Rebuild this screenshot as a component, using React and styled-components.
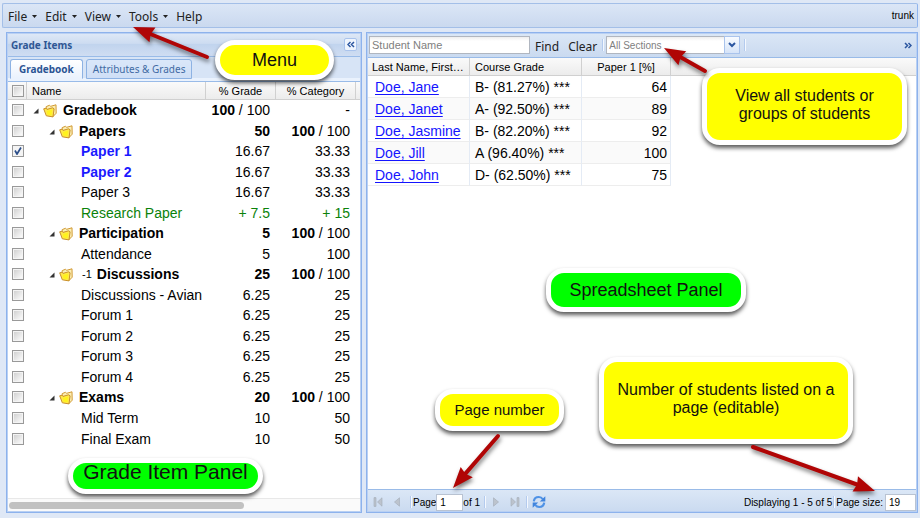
import React, { useState } from 'react';
import styled, { createGlobalStyle, css } from 'styled-components';

const ARIAL = '"Liberation Sans", Arial, sans-serif';
const TAHOMA = '"Noto Sans", Tahoma, sans-serif';

const GlobalStyle = createGlobalStyle`
  *, *::before, *::after { box-sizing: border-box; }
  body { margin: 0; background: #dfe8f6; font-family: ${ARIAL}; color: #000; }
  button, input, select { font: inherit; color: inherit; margin: 0; }
`;

const Page = styled.div`
  position: relative;
  display: flex;
  flex-direction: column;
  height: 100vh;
  overflow: hidden;
  padding: 3px 2px 5px;
  background: #dfe8f6;
`;

const MenuBar = styled.nav`
  display: flex;
  align-items: center;
  flex: none;
  height: 25px;
  margin-bottom: 4px;
  padding: 2px 3px 0 5px;
  border: 1px solid #a3bfe8;
  border-right-color: #8fb4ee;
  border-radius: 2px;
  background: linear-gradient(#dbe6f6, #cad9ef);
`;

const MenuButton = styled.button`
  display: flex;
  align-items: center;
  gap: 5px;
  margin-right: 8px;
  padding: 0;
  border: 0;
  background: none;
  color: #222;
  font-family: ${TAHOMA};
  font-size: 12px;
  line-height: 20px;
`;

const UserName = styled.span`
  margin-left: auto;
  padding-bottom: 3px;
  font-size: 10px;
`;

const Panels = styled.main`
  display: grid;
  grid-template-columns: 356px minmax(0, 1fr);
  gap: 4px;
  flex: 1;
  min-height: 0;
  padding-left: 4px;
`;

const Panel = styled.section`
  display: flex;
  flex-direction: column;
  min-width: 0;
  min-height: 0;
  border: 1px solid #8db2ec;
  outline: 1px solid #b9d0f3;
  outline-offset: -2px;
  background: #fff;
`;

const PanelHeader = styled.header`
  display: flex;
  align-items: center;
  justify-content: space-between;
  flex: none;
  height: 24px;
  padding: 0 4px;
  border-bottom: 1px solid #99bbe8;
  background: linear-gradient(#dfe9f7, #cddcf1 45%, #c1d4ee 50%, #cfddf2);
`;

const PanelTitle = styled.h2`
  margin: 0;
  color: #2f5794;
  font: bold 10px/20px ${TAHOMA};
`;

const CollapseButton = styled.button`
  display: grid;
  place-items: center;
  width: 13px;
  height: 13px;
  padding: 0;
  border: 1px solid #a9c3ec;
  border-radius: 2px;
  background: #eef4fd;
`;

const TabStrip = styled.div`
  display: flex;
  align-items: flex-end;
  flex: none;
  gap: 3px;
  height: 25px;
  padding: 0 3px 2px;
  border-bottom: 1px solid #99bbe8;
  background: linear-gradient(#d7e4f6 0 21px, #eaf2fd 21px);
`;

const Tab = styled.button`
  height: 20px;
  padding: 0 ${p => (p.$active ? 8 : 6)}px;
  border: 1px solid #8db2e3;
  border-bottom-color: ${p => (p.$active ? '#eaf2fd' : '#8db2e3')};
  border-radius: 3px 3px 0 0;
  background: ${p => (p.$active ? 'linear-gradient(#fff, #eaf2fd)' : 'linear-gradient(#dae7f9, #cfdff6)')};
  color: ${p => (p.$active ? '#2a5494' : '#416aa3')};
  font: ${p => (p.$active ? 'bold' : 'normal')} 10px/16px ${TAHOMA};
  white-space: nowrap;
`;

const GridTable = styled.table`
  width: 100%;
  height: ${p => p.$height || 'auto'};
  border-collapse: separate;
  border-spacing: 0;
  table-layout: fixed;
  flex: none;
`;

const HeadCell = styled.th`
  height: ${p => p.$height};
  padding: 0 5px;
  border-right: 1px solid #d0d0d0;
  border-bottom: 1px solid #d0d0d0;
  background: linear-gradient(#fafafa, #ececec);
  font-size: 11px;
  font-weight: normal;
  line-height: 14px;
  text-align: ${p => p.$align || 'left'};
  white-space: nowrap;
  &:last-child { border-right: 0; }
`;

const tone = {
  blue: css`color: #1a1aff; font-weight: bold;`,
  green: css`color: #0a820a;`,
  bold: css`font-weight: bold;`,
};

const TreeRow = styled.tr`
  font-size: 14px;
  line-height: 16px;
`;

const TreeCell = styled.td`
  padding: 0 6px 0 0;
  text-align: right;
  white-space: nowrap;
  ${p => tone[p.$tone]}
`;

const CheckCell = styled.td`
  padding: 0 0 0 5px;
  line-height: 0;
`;

const CheckBox = styled.input`
  appearance: none;
  display: block;
  width: 12px;
  height: 12px;
  border: 1px solid #999;
  background: linear-gradient(135deg, #cdcdcd, #fff);
  box-shadow: inset 0 0 0 1px #f4f4f4;
  &:checked {
    background: center / 10px 10px no-repeat url("data:image/svg+xml,%3Csvg xmlns='http://www.w3.org/2000/svg' viewBox='0 0 10 10'%3E%3Cpath d='M2 4.5 4 8 8 1.5' fill='none' stroke='%232d4f8a' stroke-width='1.7'/%3E%3C/svg%3E"), #f4f4f4;
  }
`;

const NameBox = styled.div`
  display: flex;
  align-items: center;
  padding-left: ${p => p.$indent}px;
  white-space: nowrap;
  ${p => tone[p.$tone]}
`;

const Folder = styled.span`
  display: flex;
  align-items: center;
  gap: 4px;
  margin-right: 6px;
  padding-top: 2px;
`;

const DropMark = styled.span`
  margin: 0 5px 0 3px;
  font-size: 11px;
  font-weight: normal;
`;

const TreeBody = styled.div`
  flex: 1;
  min-height: 0;
  overflow: hidden;
`;

const ScrollTrack = styled.div`
  flex: none;
  height: 14px;
  padding: 3px 2px;
  border-top: 1px solid #e8e8e8;
  background: #fafafa;
`;

const ScrollThumb = styled.div`
  width: 67%;
  height: 7px;
  border-radius: 4px;
  background: #c1c1c1;
`;

const ToolBar = styled.div`
  display: flex;
  align-items: center;
  flex: none;
  height: ${p => p.$height};
  padding: ${p => p.$padding};
  border: solid #99bbe8;
  border-width: ${p => (p.$bottom ? '1px 0 0' : '0 0 1px')};
  background: linear-gradient(#dbe7f6, #cadaf0);
  font-size: 10px;
  white-space: nowrap;
`;

const SearchInput = styled.input`
  width: 161px;
  height: 18px;
  padding: 0 2px;
  border: 1px solid #b0b6c0;
  background: linear-gradient(#eee, #fff 4px);
  font-size: 11px;
  &::placeholder { color: #808080; opacity: 1; }
`;

const ToolButton = styled.button`
  padding: 3px 0 0;
  margin-left: ${p => p.$gap};
  border: 0;
  background: none;
  color: #222;
  font-family: ${TAHOMA};
  font-size: 12px;
  line-height: 18px;
`;

const IconButton = styled.button`
  display: flex;
  margin-left: ${p => p.$gap || 0};
  padding: 0;
  border: 0;
  background: none;
`;

const Separator = styled.span`
  width: 2px;
  height: 12px;
  margin: ${p => p.$margin};
  border-left: 1px solid #b4cbee;
  border-right: 1px solid #f4f8fe;
`;

const SelectWrap = styled.div`
  display: flex;
  position: relative;
  width: 134px;
  height: 18px;
`;

const SectionSelect = styled.select`
  appearance: none;
  width: 100%;
  padding: 0 2px;
  border: 1px solid #b0b6c0;
  border-radius: 0;
  background: linear-gradient(#eee, #fff 4px);
  color: #808080;
  font-size: 10px;
`;

const SelectTrigger = styled.span`
  position: absolute;
  top: 0;
  right: 0;
  display: grid;
  place-items: center;
  width: 16px;
  height: 100%;
  border: 1px solid #a9c3ec;
  background: linear-gradient(#f8fbff, #d6e4f8);
  pointer-events: none;
`;

const StudentCell = styled.td`
  height: 22px;
  padding: 0 3px 0 ${p => (p.$name ? 8 : 5)}px;
  border-right: 1px solid #e4ebf5;
  border-bottom: 1px solid #ededed;
  background: ${p => (p.$odd ? '#fafafa' : '#fff')};
  font-size: 14px;
  line-height: 18px;
  text-align: ${p => p.$align || 'left'};
  white-space: nowrap;
  &:last-child { border: 0; background: #fff; }
`;

const StudentLink = styled.a`
  color: #1414ff;
  text-underline-offset: 2px;
`;

const Spreadsheet = styled.div`
  flex: 1;
  min-height: 0;
`;

const NumberInput = styled.input`
  width: ${p => p.$width};
  height: 17px;
  margin-left: ${p => p.$gap};
  padding: 0 3px;
  border: 1px solid #b9c3d2;
  background: #fff;
  font-size: 10px;
`;

const PageInfo = styled.span`
  margin-left: auto;
`;

const Callout = styled.aside`
  position: absolute;
  left: ${p => p.$x}px;
  top: ${p => p.$y}px;
  display: flex;
  flex-direction: column;
  align-items: center;
  justify-content: ${p => p.$justify || 'center'};
  width: ${p => p.$w}px;
  height: ${p => p.$h}px;
  padding-bottom: ${p => p.$lift || 0}px;
  border: 5px solid #fff;
  border-radius: ${p => p.$radius || 18}px;
  background: ${p => p.$color || '#ff0'};
  box-shadow: 0 3px 4px rgba(0, 0, 0, 0.65);
  color: #111;
  font-size: ${p => p.$size}px;
  line-height: 18px;
  white-space: nowrap;
`;

const Arrows = styled.svg`
  position: absolute;
  top: 0;
  left: 0;
  width: 920px;
  height: 518px;
  pointer-events: none;
  filter: drop-shadow(1px 3px 2px rgba(0, 0, 0, 0.5));
`;

const ITEMS = [
  { name: 'Gradebook', level: 0, a: [100, 100], b: '-' },
  { name: 'Papers', level: 1, a: [50], b: [100, 100] },
  { name: 'Paper 1', level: 2, a: '16.67', b: '33.33', tone: 'blue', checked: true },
  { name: 'Paper 2', level: 2, a: '16.67', b: '33.33', tone: 'blue' },
  { name: 'Paper 3', level: 2, a: '16.67', b: '33.33' },
  { name: 'Research Paper', level: 2, a: '+ 7.5', b: '+ 15', tone: 'green' },
  { name: 'Participation', level: 1, a: [5], b: [100, 100] },
  { name: 'Attendance', level: 2, a: '5', b: '100' },
  { name: 'Discussions', level: 1, a: [25], b: [100, 100], drop: '-1' },
  { name: 'Discussions - Avian', level: 2, a: '6.25', b: '25' },
  { name: 'Forum 1', level: 2, a: '6.25', b: '25' },
  { name: 'Forum 2', level: 2, a: '6.25', b: '25' },
  { name: 'Forum 3', level: 2, a: '6.25', b: '25' },
  { name: 'Forum 4', level: 2, a: '6.25', b: '25' },
  { name: 'Exams', level: 1, a: [20], b: [100, 100] },
  { name: 'Mid Term', level: 2, a: '10', b: '50' },
  { name: 'Final Exam', level: 2, a: '10', b: '50' },
];

const STUDENTS = [
  ['Doe, Jane', 'B- (81.27%) ***', 64],
  ['Doe, Janet', 'A- (92.50%) ***', 89],
  ['Doe, Jasmine', 'B- (82.20%) ***', 92],
  ['Doe, Jill', 'A (96.40%) ***', 100],
  ['Doe, John', 'D- (62.50%) ***', 75],
];

const MENUS = ['File', 'Edit', 'View', 'Tools', 'Help'];

const CaretDown = () => (
  <svg width="5" height="3" viewBox="0 0 5 3" aria-hidden="true"><path d="M0 0h5L2.500 3z" fill="#222" /></svg>
);

const Chevrons = ({ flip }) => (
  <svg width="8" height="7" viewBox="0 0 8 7" aria-hidden="true">
    <path d={flip ? 'M1 1l2.500 2.500L1 6M4.500 1L7 3.500 4.500 6' : 'M3.500 1L1 3.500 3.500 6M7 1L4.500 3.500 7 6'} fill="none" stroke="#2b56a0" strokeWidth="1.500" />
  </svg>
);

const FolderIcon = () => (
  <Folder>
    <svg width="6" height="6" viewBox="0 0 6 6" aria-hidden="true"><path d="M5.500 .5v5h-5z" fill="#333" /></svg>
    <svg width="14" height="14" viewBox="0 0 14 14" aria-hidden="true">
      <path d="M3.200 5V2.600L6.400 1.300l1.300 1L13 .8l.2 8.400-3.400 3.600z" fill="#fbeeb4" stroke="#d19a35" strokeLinejoin="round" />
      <path d="M.7 4.800l2.400-.6L4 5.400l5.500-1.600 1.600 1L10 12.900 3.300 11.800z" fill="#ffe94a" stroke="#c98f2c" strokeLinejoin="round" />
      <path d="M4.300 10.500L4 7l5-1.300-.5 5.500z" fill="#fff31c" />
    </svg>
  </Folder>
);

const PageArrow = ({ back, bar }) => (
  <svg width="10" height="10" viewBox="0 0 10 10" aria-hidden="true">
    <g transform={back ? 'translate(10 0) scale(-1 1)' : undefined} fill="#bcc3cd" stroke="#a3abb7" strokeWidth=".6">
      <path d={bar ? 'M1 .8v8.400L5.500 5z' : 'M2.500 .8v8.400L7.500 5z'} />
      {bar && <path d="M7 .6h2v8.800H7z" />}
    </g>
  </svg>
);

const RefreshIcon = () => (
  <svg width="14" height="14" viewBox="0 0 14 14" aria-hidden="true">
    <g fill="none" stroke="#4f92e6" strokeWidth="2.200">
      <path d="M1.800 6.300C2.200 3.200 4.500 2 6.800 2c1.600 0 2.900.6 3.800 2" />
      <path d="M12.200 7.700C11.800 10.800 9.500 12 7.200 12c-1.600 0-2.900-.6-3.800-2" />
    </g>
    <g fill="#3f84dd">
      <path d="M13.300 1.200v5.300H7.800z" />
      <path d="M.7 12.800V7.500h5.500z" />
    </g>
  </svg>
);

const Weight = ({ value }) => {
  if (!Array.isArray(value)) return value;
  return <><b>{value[0]}</b>{value.length > 1 && ` / ${value[1]}`}</>;
};

function GradeItems() {
  return (
    <Panel>
      <PanelHeader>
        <PanelTitle>Grade Items</PanelTitle>
        <CollapseButton aria-label="Collapse"><Chevrons /></CollapseButton>
      </PanelHeader>
      <TabStrip role="tablist">
        <Tab role="tab" aria-selected="true" $active>Gradebook</Tab>
        <Tab role="tab" aria-selected="false">Attributes &amp; Grades</Tab>
      </TabStrip>
      <TreeBody>
        <GridTable $height="367px">
          <colgroup><col width="20" /><col /><col width="70" /><col width="80" /><col width="5" /></colgroup>
          <thead>
            <tr>
              <HeadCell $height="18px"><CheckBox type="checkbox" aria-label="Select all" /></HeadCell>
              <HeadCell $height="18px">Name</HeadCell>
              <HeadCell $height="18px" $align="center">% Grade</HeadCell>
              <HeadCell $height="18px" $align="center">% Category</HeadCell>
              <HeadCell $height="18px" />
            </tr>
          </thead>
          <tbody>
            {ITEMS.map(item => {
              const group = item.level < 2;
              const valueTone = item.tone === 'green' ? 'green' : undefined;
              return (
                <TreeRow key={item.name}>
                  <CheckCell><CheckBox type="checkbox" defaultChecked={item.checked} aria-label={item.name} /></CheckCell>
                  <td>
                    <NameBox $indent={group ? 5 + item.level * 16 : 53} $tone={group ? 'bold' : item.tone}>
                      {group && <FolderIcon />}
                      {item.drop && <DropMark>{item.drop}</DropMark>}
                      {item.name}
                    </NameBox>
                  </td>
                  <TreeCell $tone={valueTone}><Weight value={item.a} /></TreeCell>
                  <TreeCell $tone={valueTone}><Weight value={item.b} /></TreeCell>
                  <td />
                </TreeRow>
              );
            })}
          </tbody>
        </GridTable>
      </TreeBody>
      <ScrollTrack><ScrollThumb /></ScrollTrack>
    </Panel>
  );
}

function Students() {
  const [query, setQuery] = useState('');
  return (
    <Panel>
      <ToolBar $height="25px" $padding="0 5px 0 2px">
        <SearchInput aria-label="Student Name" placeholder="Student Name" value={query} onChange={e => setQuery(e.target.value)} />
        <ToolButton $gap="5px">Find</ToolButton>
        <ToolButton $gap="9px">Clear</ToolButton>
        <Separator $margin="0 2px 0 5px" />
        <SelectWrap>
          <SectionSelect aria-label="Section"><option>All Sections</option></SectionSelect>
          <SelectTrigger>
            <svg width="8" height="6" viewBox="0 0 8 6" aria-hidden="true"><path d="M1 1l3 3 3-3" fill="none" stroke="#2b56a0" strokeWidth="2" /></svg>
          </SelectTrigger>
        </SelectWrap>
        <Separator $margin="0 auto 0 4px" />
        <IconButton aria-label="More"><Chevrons flip /></IconButton>
      </ToolBar>
      <Spreadsheet>
        <GridTable>
          <colgroup><col width="103" /><col width="112" /><col width="89" /><col /></colgroup>
          <thead>
            <tr>
              <HeadCell $height="18px">Last Name, First…</HeadCell>
              <HeadCell $height="18px">Course Grade</HeadCell>
              <HeadCell $height="18px" $align="center">Paper 1 [%]</HeadCell>
              <HeadCell $height="18px" />
            </tr>
          </thead>
          <tbody>
            {STUDENTS.map(([name, grade, paper], i) => (
              <tr key={name}>
                <StudentCell $name $odd={i % 2}><StudentLink href="#student">{name}</StudentLink></StudentCell>
                <StudentCell $odd={i % 2}>{grade}</StudentCell>
                <StudentCell $odd={i % 2} $align="right">{paper}</StudentCell>
                <StudentCell />
              </tr>
            ))}
          </tbody>
        </GridTable>
      </Spreadsheet>
      <ToolBar $bottom $height="23px" $padding="2px 1px 0 6px">
        <IconButton aria-label="First page"><PageArrow back bar /></IconButton>
        <IconButton $gap="9px" aria-label="Previous page"><PageArrow back /></IconButton>
        <Separator $margin="0 1px 0 8px" />
        <label htmlFor="page">Page</label>
        <NumberInput id="page" $width="27px" $gap="0" defaultValue="1" />
        <span>of 1</span>
        <Separator $margin="0 5px 0 4px" />
        <IconButton aria-label="Next page"><PageArrow /></IconButton>
        <IconButton $gap="9px" aria-label="Last page"><PageArrow bar /></IconButton>
        <Separator $margin="0 4px 0 6px" />
        <IconButton aria-label="Refresh"><RefreshIcon /></IconButton>
        <PageInfo>Displaying 1 - 5 of 5</PageInfo>
        <Separator $margin="0 1px" />
        <label htmlFor="size">Page size:</label>
        <NumberInput id="size" $width="31px" $gap="2px" defaultValue="19" />
      </ToolBar>
    </Panel>
  );
}

const ARROWS = [
  { tail: [207, 57], tip: [133, 27] },
  { tail: [705, 71], tip: [664, 48] },
  { tail: [498, 436], tip: [453, 488] },
  { tail: [753, 447], tip: [875, 491] },
];

function ArrowShape({ tail, tip }) {
  const dx = tip[0] - tail[0];
  const dy = tip[1] - tail[1];
  const length = Math.hypot(dx, dy);
  const angle = (Math.atan2(dy, dx) * 180) / Math.PI;
  return (
    <g transform={`translate(${tail[0]} ${tail[1]}) rotate(${angle})`}>
      <path d={`M0 0H${length - 14}`} stroke="#b00505" strokeWidth="4" strokeLinecap="round" />
      <path d={`M${length - 21} -8L${length} 0L${length - 21} 8L${length - 19} 0z`} fill="#b00505" />
    </g>
  );
}

export default function App() {
  return (
    <Page>
      <GlobalStyle />
      <MenuBar>
        {MENUS.map(menu => (
          <MenuButton key={menu}>{menu}{menu !== 'Help' && <CaretDown />}</MenuButton>
        ))}
        <UserName>trunk</UserName>
      </MenuBar>
      <Panels>
        <GradeItems />
        <Students />
      </Panels>
      <Callout $x={215} $y={40} $w={119} $h={40} $radius={20} $size={18}>Menu</Callout>
      <Callout $x={702} $y={68} $w={205} $h={77} $lift={4} $size={16}>
        <span>View all students or</span>
        <span>groups of students</span>
      </Callout>
      <Callout $x={546} $y={268} $w={200} $h={44} $size={18} $color="#0f0">Spreadsheet Panel</Callout>
      <Callout $x={435} $y={389} $w={129} $h={42} $size={15}>Page number</Callout>
      <Callout $x={599} $y={357} $w={254} $h={87} $lift={4} $size={16}>
        <span>Number of students listed on a</span>
        <span>page (editable)</span>
      </Callout>
      <Callout $x={68} $y={458} $w={195} $h={36} $size={21} $color="#0f0" $justify="flex-start">Grade Item Panel</Callout>
      <Arrows viewBox="0 0 920 518" aria-hidden="true">
        {ARROWS.map(arrow => <ArrowShape key={arrow.tip[0]} {...arrow} />)}
      </Arrows>
    </Page>
  );
}
